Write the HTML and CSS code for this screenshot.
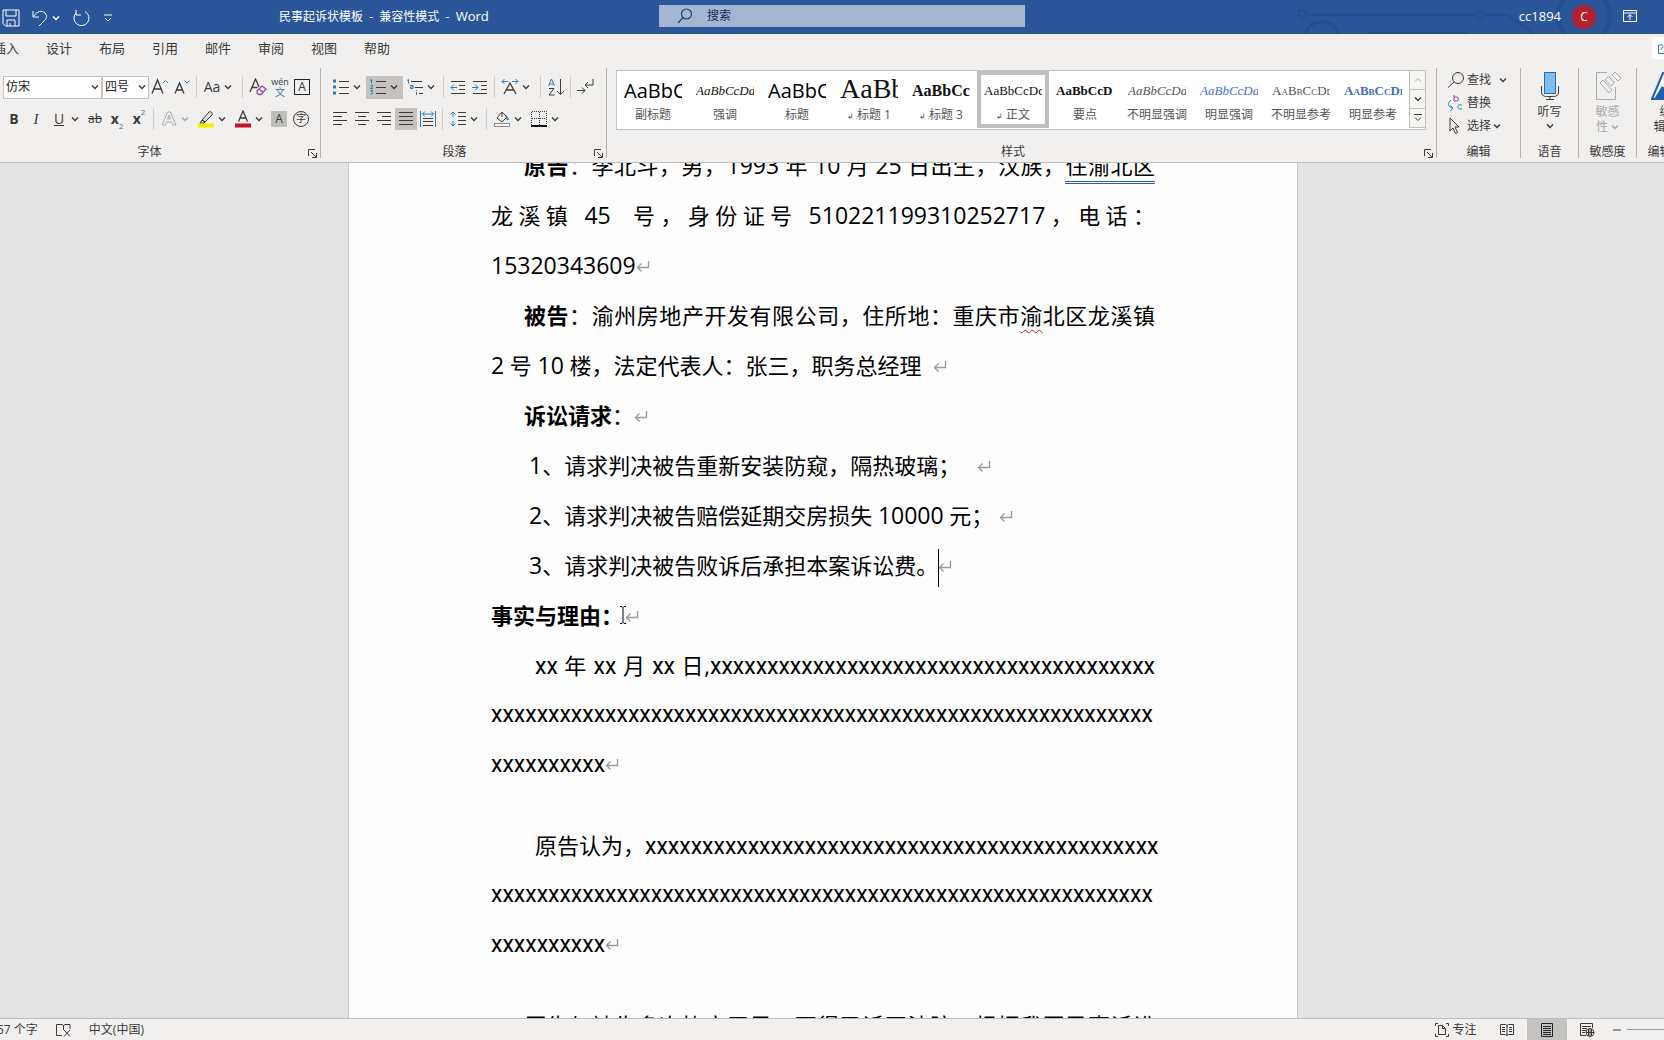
FILE: index.html
```html
<!DOCTYPE html>
<html lang="zh-CN">
<head>
<meta charset="utf-8">
<title>民事起诉状模板 - 兼容性模式 - Word</title>
<link rel="stylesheet" href="styles.css">
</head>
<body>
<svg class="sprite" aria-hidden="true">
  <symbol id="chev" viewBox="0 0 8 8"><path d="M1 2.500l3 3 3-3" fill="none" stroke="currentColor" stroke-width="1.4"/></symbol>
  <symbol id="launch" viewBox="0 0 9 9"><path d="M.5 7V.5H7M3 3l5 5M8.500 4v4.500H4" fill="none" stroke="currentColor"/></symbol>
  <symbol id="mark" viewBox="0 0 14 14"><path d="M12.500 1v6.500H2M5.500 3.500l-4 4 4 4" fill="none" stroke="#9a9a9a" stroke-width="1.300"/></symbol>
</svg>

<header class="titlebar">
  <svg class="circuit" viewBox="0 0 380 34" fill="none" stroke="#244e8e" stroke-width="2" aria-hidden="true"><circle cx="18" cy="14" r="4"/><path d="M22 15h168M202 15h22l26 19"/><circle cx="196" cy="15" r="4"/><path d="M22 34a16 12 0 0 1 32 0M84 33h100" stroke-width="3"/><circle cx="300" cy="16" r="26" stroke-width="4"/></svg>
  <nav class="quick">
    <button aria-label="保存"><svg width="18" height="18" viewBox="0 0 18 18"><path d="M1 1h16v16H3.500L1 14.500zM4 1v6h10V1M5 17v-6h8v6M8 14v3"/></svg></button>
    <button aria-label="撤消" class="undo"><svg width="16" height="18" viewBox="0 0 16 18"><path d="M1 2v6h6M1.500 7.500C5 2 10 1 13 4s1 6-1 8l-5 5"/></svg><svg class="chev"><use href="#chev"/></svg></button>
    <button aria-label="重复"><svg width="18" height="18" viewBox="0 0 18 18"><path d="M4 1v5h5M5 5.500M13 2.500a7.500 7.500 0 1 1-8.500 1"/></svg></button>
    <button aria-label="自定义" class="custom"><svg width="8" height="8" viewBox="0 0 8 8"><path d="M0 1h8M1 4l3 3 3-3"/></svg></button>
  </nav>
  <h1>民事起诉状模板&nbsp; -&nbsp; 兼容性模式&nbsp; -&nbsp; <span>Word</span></h1>
  <label class="search"><svg width="16" height="16" viewBox="0 0 16 16" fill="none" stroke="#1f3f77" stroke-width="1.200"><circle cx="9.500" cy="6" r="5"/><path d="M6 9.500L1 15"/></svg><input type="text" placeholder="搜索" aria-label="搜索"></label>
  <div class="account"><span>cc1894</span><button class="avatar">C</button><button aria-label="功能区显示选项" class="mode"><svg width="14" height="12" viewBox="0 0 14 12"><path d="M.5.5h13v11H.5zM.5 3h13M7 10V5M4.500 7L7 4.500 9.500 7"/></svg></button></div>
</header>

<nav class="tabs">
  <a href="#">插入</a><a href="#">设计</a><a href="#">布局</a><a href="#">引用</a><a href="#">邮件</a><a href="#">审阅</a><a href="#">视图</a><a href="#">帮助</a>
  <button class="share" aria-label="共享"><svg width="12" height="12" viewBox="0 0 12 12"><path class="b" d="M5 3H.5v8.500h11V7M3 8c1-3 3-4 6-4M7 1l3 3-3 3"/></svg></button>
</nav>

<section class="ribbon">
  <div class="group font">
    <div class="row">
      <select class="face" aria-label="字体"><option>仿宋</option></select>
      <select class="size" aria-label="字号"><option>四号</option></select>
      <button class="ib" aria-label="增大字号"><svg width="18" height="18" viewBox="0 0 18 18"><path d="M1 15.500L6.500 2 12 15.500M3 11h7" stroke-width="1.300"/><path class="b" d="M12 5l2.500-2.500L17 5"/></svg></button>
      <button class="ib" aria-label="减小字号"><svg width="18" height="18" viewBox="0 0 18 18"><path d="M2 15.500L6.500 5 11 15.500M3.500 12h6" stroke-width="1.300"/><path class="b" d="M11.500 2.500L14 5l2.500-2.500"/></svg></button>
      <i class="sep"></i>
      <button class="dd"><span class="ch">Aa</span><svg class="chev"><use href="#chev"/></svg></button>
      <i class="sep wide"></i>
      <button class="ib" aria-label="清除格式"><svg width="18" height="18" viewBox="0 0 18 18"><path d="M1 14L6.500 1l3.500 8M3.500 9.500h5" stroke-width="1.300"/><path d="M8 13l5-5 4 3-5 5.500H10L8 15zM10 11l4 3" stroke="#9b3fae" stroke-width="1.300"/></svg></button>
      <button class="ib pinyin"><span>wén</span><span class="zh">文</span></button>
      <button class="ib"><span class="boxed">A</span></button>
    </div>
    <div class="row">
      <button class="ib"><b>B</b></button>
      <button class="ib"><em>I</em></button>
      <button class="dd"><u class="ch">U</u><svg class="chev"><use href="#chev"/></svg></button>
      <button class="ib"><s>ab</s></button>
      <button class="ib script"><b>x</b><sub>2</sub></button>
      <button class="ib script"><b>x</b><sup>2</sup></button>
      <i class="sep"></i>
      <button class="dd dim" aria-label="文本效果"><svg width="16" height="18" viewBox="0 0 16 18"><path d="M1 15L6.500 2h3L15 15h-3.500l-1-3h-5l-1 3zM6.500 9h3L8 5z"/></svg><svg class="chev"><use href="#chev"/></svg></button>
      <button class="dd" aria-label="突出显示"><svg width="18" height="18" viewBox="0 0 18 18"><path d="M5 10l7-8c2-1 4 1 3 3l-7 7zM5 10l3 2-1 1H3z" fill="#ddd"/><path d="M1 15.500h16" stroke="#f7f000" stroke-width="4"/></svg><svg class="chev"><use href="#chev"/></svg></button>
      <button class="dd" aria-label="字体颜色"><svg width="18" height="18" viewBox="0 0 18 18"><path d="M4.500 11.500L9 1l4.500 10.500M6 8h6" stroke-width="1.300"/><path d="M1 15.500h16" stroke="#c8101e" stroke-width="4"/></svg><svg class="chev"><use href="#chev"/></svg></button>
      <button class="ib"><span class="shade">A</span></button>
      <button class="ib"><span class="ring">字</span></button>
    </div>
    <footer><span>字体</span><svg class="launch"><use href="#launch"/></svg></footer>
  </div>

  <div class="group para">
    <div class="row">
      <button class="dd" aria-label="项目符号"><svg width="16" height="16" viewBox="0 0 16 16"><path d="M6 2.500h10M6 8.500h10M6 14.500h10"/><path d="M0 2h3M0 8h3M0 14h3" stroke="#2b7fb8" stroke-width="3"/></svg><svg class="chev"><use href="#chev"/></svg></button>
      <button class="dd on" aria-label="编号"><svg width="16" height="16" viewBox="0 0 16 16"><path d="M6 2.500h10M6 8.500h10M6 14.500h10"/><path class="b" d="M0 1.500L1.500.5v4M.5 6.500h2v1L.5 9.500h2.500M.5 11.500h2l-1 1.500c2 0 1 2.500-1 2"/></svg><svg class="chev"><use href="#chev"/></svg></button>
      <button class="dd" aria-label="多级列表"><svg width="16" height="16" viewBox="0 0 16 16"><path d="M4 2.500h11M8 8.500h8M12 14.500h4"/><path class="b" d="M0 1.500L1.500.5v4M3 6.500h3v3H3.500V8H6M9.500 11v1M9.500 13v3"/></svg><svg class="chev"><use href="#chev"/></svg></button>
      <i class="sep"></i>
      <button class="ib" aria-label="减少缩进"><svg width="16" height="16" viewBox="0 0 16 16"><path d="M1 2.500h14M9 6.500h6M9 10.500h6M1 14.500h14"/><path class="b" d="M7 8.500H1M4 5.500l-3 3 3 3"/></svg></button>
      <button class="ib" aria-label="增加缩进"><svg width="16" height="16" viewBox="0 0 16 16"><path d="M1 2.500h14M9 6.500h6M9 10.500h6M1 14.500h14"/><path class="b" d="M0 8.500h6M3 5.500l3 3-3 3"/></svg></button>
      <i class="sep"></i>
      <button class="dd" aria-label="中文版式"><svg width="18" height="18" viewBox="0 0 18 18"><path d="M3 16L9 5l6 11M5.500 12h7" stroke-width="1.300"/><path class="b" d="M7 3.500H1M3.500 1L1 3.500 3.500 6M11 3.500h6M14.500 1L17 3.500 14.500 6"/></svg><svg class="chev"><use href="#chev"/></svg></button>
      <i class="sep wide"></i>
      <button class="ib" aria-label="排序"><svg width="18" height="18" viewBox="0 0 18 18"><path class="b" d="M1.500 8L4.500 1l3 7M2.500 6h4"/><path d="M2 10.500h5L2 17h5.500M13.500 1v15M10 13l3.500 3.500L17 13"/></svg></button>
      <i class="sep"></i>
      <button class="ib" aria-label="显示编辑标记"><svg width="18" height="18" viewBox="0 0 18 18"><path d="M17 1v6H9M12 4L9 7l3 3M1 12.500h8M6 9.500l3 3-3 3"/></svg></button>
    </div>
    <div class="row">
      <button class="ib" aria-label="左对齐"><svg width="14" height="14" viewBox="0 0 14 14"><path d="M0 .5h14M0 4.500h9M0 8.500h14M0 12.500h9"/></svg></button>
      <button class="ib" aria-label="居中"><svg width="14" height="14" viewBox="0 0 14 14"><path d="M0 .5h14M3 4.500h8M0 8.500h14M3 12.500h8"/></svg></button>
      <button class="ib" aria-label="右对齐"><svg width="14" height="14" viewBox="0 0 14 14"><path d="M0 .5h14M5 4.500h9M0 8.500h14M5 12.500h9"/></svg></button>
      <button class="ib on" aria-label="两端对齐"><svg width="14" height="14" viewBox="0 0 14 14"><path d="M0 .5h14M0 4.500h14M0 8.500h14M0 12.500h14"/></svg></button>
      <button class="ib" aria-label="分散对齐"><svg width="16" height="16" viewBox="0 0 16 16"><path d="M3 7.500h10M3 10.500h10M3 14.500h10"/><path class="b" d="M.5 0v16M15.500 0v16M2.500 3h11M5 .5L2.500 3 5 5.500M11 .5L13.500 3 11 5.500"/></svg></button>
      <i class="sep"></i>
      <button class="dd" aria-label="行距"><svg width="16" height="16" viewBox="0 0 16 16"><path d="M8 1.500h8M8 5.500h8M8 9.500h8M8 13.500h8"/><path class="b" d="M3 1v5M3 10v5M.5 3.500L3 1l2.500 2.500M.5 12.500L3 15l2.500-2.500"/></svg><svg class="chev"><use href="#chev"/></svg></button>
      <i class="sep"></i>
      <button class="dd" aria-label="底纹"><svg width="16" height="16" viewBox="0 0 16 16"><path d="M8 1L3 7l5 4 5-5zM8 1v5"/><path d="M12 5l2 4" class="b" stroke-width="2"/><path d="M.5 12.500h15v3H.5z" stroke="#888" fill="#fff"/></svg><svg class="chev"><use href="#chev"/></svg></button>
      <button class="dd" aria-label="边框"><svg width="16" height="16" viewBox="0 0 16 16"><path d="M.5 14V.5h15V14M8.500 1v13M1 7.500h14" stroke-dasharray="1 1"/><path d="M0 15h16" stroke-width="2" stroke="#000"/></svg><svg class="chev"><use href="#chev"/></svg></button>
    </div>
    <footer><span>段落</span><svg class="launch"><use href="#launch"/></svg></footer>
  </div>

  <div class="group styles">
    <div class="gallery">
      <button><span class="s s-title">AaBbCc</span><span>副标题</span></button>
      <button><span class="s s-it">AaBbCcDd</span><span>强调</span></button>
      <button><span class="s s-title">AaBbCc</span><span>标题</span></button>
      <button><span class="s s-h1">AaBb</span><span><small>↲</small> 标题 1</span></button>
      <button><span class="s s-h3">AaBbCc</span><span><small>↲</small> 标题 3</span></button>
      <button class="sel"><span class="s">AaBbCcDd</span><span><small>↲</small> 正文</span></button>
      <button><span class="s s-strong">AaBbCcD</span><span>要点</span></button>
      <button><span class="s s-it grey">AaBbCcDd</span><span>不明显强调</span></button>
      <button><span class="s s-it blue">AaBbCcDd</span><span>明显强调</span></button>
      <button><span class="s s-caps grey">AaBbCcDd</span><span>不明显参考</span></button>
      <button><span class="s s-caps s-strong blue">AaBbCcDd</span><span>明显参考</span></button>
      <div class="scroll">
        <button aria-label="向上" class="up"><svg width="8" height="8" viewBox="0 0 8 8"><path d="M1 5.500l3-3 3 3"/></svg></button>
        <button aria-label="向下"><svg class="chev"><use href="#chev"/></svg></button>
        <button aria-label="其他"><svg width="8" height="10" viewBox="0 0 8 10"><path d="M0 1.500h8M1 4.500l3 3 3-3"/></svg></button>
      </div>
    </div>
    <footer><span>样式</span><svg class="launch"><use href="#launch"/></svg></footer>
  </div>

  <div class="group edit">
    <div class="stack">
      <button><svg width="18" height="16" viewBox="0 0 18 16"><circle cx="11" cy="6" r="5.500"/><path d="M7 10l-6 5.500"/></svg>查找<svg class="chev far"><use href="#chev"/></svg></button>
      <button><svg width="18" height="18" viewBox="0 0 18 18"><path d="M7 1v6h2.500a2 2 0 0 0 0-4H7" stroke="#a040a8"/><path class="b" d="M15 11.500c-3-2-5 0-4 2s3 2 4 1M4 6c-4 3-3 7 1 8M3 11.500L6 14l-2.500 3"/></svg>替换</button>
      <button><svg width="18" height="18" viewBox="0 0 18 18"><path d="M3 1v13l3-3 2.500 5.500 2-1L8 10h4z"/></svg>选择<svg class="chev"><use href="#chev"/></svg></button>
    </div>
    <footer><span>编辑</span></footer>
  </div>
  <div class="group tall">
    <button><svg width="20" height="30" viewBox="0 0 20 30"><rect x="4.500" y="1.500" width="11" height="21" fill="#7fbdee" stroke="#1d6fb0"/><path d="M1.500 15v6c0 3 2 4.500 5 4.500h7c3 0 5-1.500 5-4.500v-6M10 25.500V29M6 28.500h8"/></svg><span>听写</span><svg class="chev"><use href="#chev"/></svg></button>
    <footer><span>语音</span></footer>
  </div>
  <div class="group tall">
    <button class="dim" disabled><svg width="28" height="30" viewBox="0 0 28 30"><path d="M13 1.500H2.500v27h19V16M6 12l3-3 9 10-3 3zM11 9l3.500-4 2 2c2 2 1 4 4 4l-3 4zM18 4l3-3 6 6-3 3z"/></svg><span>敏感<br>性 <svg class="chev"><use href="#chev"/></svg></span></button>
    <footer><span>敏感度</span></footer>
  </div>
  <div class="group tall">
    <button><svg width="30" height="30" viewBox="0 0 30 30"><path d="M1 28L12 2h6l11 26z" fill="#fff" stroke="#1f5fb0" stroke-width="2"/><path d="M3 28l8-13 4 3 4-3 8 13z" fill="#1f5fb0" stroke="none"/></svg><span>编<br>辑器</span></button>
    <footer><span>编辑器</span></footer>
  </div>
</section>

<main class="workspace">
  <article class="page">
    <p class="in full"><b>原告</b>：李北斗，男，<span class="n">1993</span> 年 <span class="n">10</span> 月 <span class="n">25</span> 日出生，汉族，<span class="gram">住渝北区</span></p>
    <p class="full">龙溪镇 <span class="n">45</span>&nbsp; 号，身份证号 <span class="n">510221199310252717</span>，电话：</p>
    <p><span class="n">15320343609</span><svg class="mark"><use href="#mark"/></svg></p>
    <p class="in full"><b>被告</b>：渝州房地产开发有限公司，住所地：重庆市<span class="spell">渝</span>北区龙溪镇</p>
    <p><span class="n">2</span> 号 <span class="n">10</span> 楼，法定代表人：张三，职务总经理&nbsp; <svg class="mark"><use href="#mark"/></svg></p>
    <p class="in"><b>诉讼请求</b>：<svg class="mark"><use href="#mark"/></svg></p>
    <p class="item"><span class="n">1</span>、请求判决被告重新安装防窥，隔热玻璃；&nbsp; &nbsp;<svg class="mark"><use href="#mark"/></svg></p>
    <p class="item"><span class="n">2</span>、请求判决被告赔偿延期交房损失 <span class="n">10000</span> 元；&nbsp;<svg class="mark"><use href="#mark"/></svg></p>
    <p class="item"><span class="n">3</span>、请求判决被告败诉后承担本案诉讼费。<i class="caret"></i><svg class="mark"><use href="#mark"/></svg></p>
    <p><b>事实与理由：</b><svg class="ibeam" viewBox="0 0 8 18"><path d="M1 .5h2l1 1 1-1h2M1 17.500h2l1-1 1 1h2M4 1.500v15" fill="none" stroke="#000"/></svg><svg class="mark"><use href="#mark"/></svg></p>
    <p class="in2 full"><span class="x">xx</span> 年 <span class="x">xx</span> 月 <span class="x">xx</span> 日,<span class="x">xxxxxxxxxxxxxxxxxxxxxxxxxxxxxxxxxxxxxxx</span></p>
    <p class="x">xxxxxxxxxxxxxxxxxxxxxxxxxxxxxxxxxxxxxxxxxxxxxxxxxxxxxxxxxx</p>
    <p class="x last">xxxxxxxxxx<svg class="mark"><use href="#mark"/></svg></p>
    <p class="in2">原告认为，<span class="x">xxxxxxxxxxxxxxxxxxxxxxxxxxxxxxxxxxxxxxxxxxxxx</span></p>
    <p class="x">xxxxxxxxxxxxxxxxxxxxxxxxxxxxxxxxxxxxxxxxxxxxxxxxxxxxxxxxxx</p>
    <p class="x last">xxxxxxxxxx<svg class="mark"><use href="#mark"/></svg></p>
    <p class="in full">原告与被告多次协商无果，不得已诉至法院，根据我国民事诉讼</p>
  </article>
</main>

<footer class="status">
  <span class="count">57 个字</span>
  <button aria-label="校对"><svg width="15" height="14" viewBox="0 0 15 14"><path d="M6 12.500H.5v-11H6l1.500 1 1.500-1h5V6M7.500 2.500V7M8 7l6 6.500M14 7l-6 6.500"/></svg></button>
  <span>中文(中国)</span>
  <div class="views">
    <button class="focus"><svg width="14" height="14" viewBox="0 0 14 14"><path d="M3 .5H.5V3M11 .5h2.500V3M3 13.500H.5V11M11 13.500h2.500V11M3.500 2.500h4l3 3v6h-7zM7.500 2.500v3h3"/></svg>专注</button>
    <button aria-label="阅读视图"><svg width="14" height="12" viewBox="0 0 14 12"><path d="M7 1.500L5.500.5h-5v10h5L7 11.500l1.500-1h5V.5h-5L7 1.500v10M2 3.500h3M2 5.500h3M2 7.500h3M9 3.500h3M9 5.500h3M9 7.500h3"/></svg></button>
    <button aria-label="页面视图" class="on"><svg width="12" height="14" viewBox="0 0 12 14"><path d="M.5.5h11v13H.5zM2 3.500h8M2 5.500h8M2 7.500h8M2 9.500h8M2 11.500h8" stroke="#222"/></svg></button>
    <button aria-label="Web 版式"><svg width="15" height="14" viewBox="0 0 15 14"><path d="M6 12.500H.5V.5h12V5M2 3.500h9M2 5.500h5M2 7.500h4M2 9.500h3"/><circle cx="10" cy="9.500" r="4" fill="#f3f2f1"/><path d="M6 9.500h8M10 5.500v8M8.500 6v7M11.500 6v7"/></svg></button>
    <button aria-label="缩小" class="minus"><svg width="8" height="2" viewBox="0 0 8 2"><path d="M0 1h8"/></svg></button>
    <i class="track"></i>
  </div>
</footer>
</body>
</html>
```
FILE: styles.css
```css
* { box-sizing: border-box; }
body {
  margin: 0;
  height: 100vh;
  display: flex;
  flex-direction: column;
  overflow: hidden;
  background: #e4e4e4;
  color: #3b3a39;
  font: 12px/16px "Open Sans", "Noto Sans CJK SC", sans-serif;
}
button {
  display: flex;
  align-items: center;
  justify-content: center;
  padding: 0;
  border: 0;
  background: none;
  color: inherit;
  font: inherit;
}
svg { flex: none; }
button svg { fill: none; stroke: #3b3a39; }
button svg .b { stroke: #2b7fb8; }
.sprite { position: absolute; width: 0; height: 0; }
.chev { width: 8px; height: 8px; }
button .chev { stroke: none; }
.on { background: #c5c3c1; }

/* title bar */
.titlebar {
  position: relative;
  flex: none;
  display: flex;
  align-items: center;
  height: 34px;
  padding-bottom: 2px;
  background: #2a5699;
  color: #fff;
}
.titlebar > * { position: relative; }
.titlebar .circuit { position: absolute; top: 0; right: 0; width: 380px; height: 34px; }
.titlebar button svg { stroke: #fff; }
.quick { display: flex; align-items: center; width: 279px; padding: 4px 0 0 2px; gap: 12px; }
.undo { gap: 4px; }
.custom { margin-left: 2px; }
.titlebar h1 { margin: 0; width: 380px; font-size: 12px; font-weight: 400; white-space: pre; }
.titlebar h1 span { font-size: 13px; }
.search {
  display: flex;
  align-items: center;
  flex: 0 1 366px;
  height: 22px;
  padding-left: 18px;
  gap: 14px;
  background: #a3b7d3;
}
.search input { flex: 1; min-width: 0; padding: 0; border: 0; background: none; font: inherit; }
.search input::placeholder { color: #14295c; opacity: 1; }
.account { display: flex; align-items: center; margin-left: auto; padding-right: 27px; font-size: 13px; }
.avatar { width: 24px; height: 24px; margin: 2px 27px 0 11px; border-radius: 50%; background: #b3202e; font-size: 12px; }

/* ribbon tabs */
.tabs {
  flex: none;
  display: flex;
  align-items: center;
  gap: 27px;
  height: 30px;
  margin-left: -7px;
  padding-bottom: 3px;
  font-size: 13px;
}
.tabs, .ribbon { background: #f1f0ef; }
.tabs a { color: inherit; text-decoration: none; white-space: nowrap; }
.share { width: 12px; height: 22px; margin-left: auto; background: #fff; justify-content: flex-start; overflow: hidden; padding-left: 6px; }

/* ribbon */
.ribbon {
  flex: none;
  display: flex;
  height: 99px;
  padding: 4px 0;
  border-bottom: 1px solid #c0bfbe;
  overflow: hidden;
}
.group { flex: none; display: flex; flex-direction: column; border-right: 1px solid #b5b3b1; }
.group > footer {
  display: flex;
  align-items: center;
  justify-content: center;
  position: relative;
  height: 12px;
  margin-top: auto;
  white-space: nowrap;
}
.launch { position: absolute; right: 3px; bottom: 0; width: 9px; height: 9px; }
.row { display: flex; align-items: center; height: 24px; margin-top: 7px; }
.row + .row { margin-top: 8px; }
.font { width: 321px; padding-left: 3px; }
.font > footer { padding-right: 24px; }
.para { width: 286px; padding-left: 8px; }
.para > footer { padding-right: 26px; }
.ib { flex: none; width: 22px; height: 22px; }
.dd { flex: none; width: 37px; height: 23px; justify-content: flex-start; }
.dd > :first-child { margin: 0 auto; }
.dd .chev { margin: 0 5px 0 0; }
.sep { flex: none; width: 4px; height: 22px; margin-right: 3px; border-right: 1px solid #cfcdcb; }
.sep.wide { width: 6px; margin-right: 4px; }
.face, .size {
  flex: none;
  height: 23px;
  width: 99px;
  padding: 0 2px;
  appearance: none;
  border: 1px solid #c5c3c1;
  border-radius: 0;
  color: #222;
  font: inherit;
  background: #fff url("data:image/svg+xml,%3Csvg xmlns='http://www.w3.org/2000/svg' width='8' height='8'%3E%3Cpath d='M1 2.500l3 3 3-3' fill='none' stroke='%233b3a39' stroke-width='1.400'/%3E%3C/svg%3E") no-repeat right 2px center;
}
.size { width: 47px; }
.ch { font-size: 14px; }
.row b { font-size: 14px; }
.row em { font: italic 15px "Liberation Serif", serif; }
.pinyin { flex-direction: column; font-size: 9px; line-height: 10px; }
.pinyin .zh { color: #2b7fb8; font-size: 10px; }
.boxed { width: 16px; height: 16px; border: 1px solid #222; line-height: 14px; }
.shade { width: 16px; height: 16px; background: #c0bebc; }
.ring { width: 16px; height: 16px; border: 1px solid #3b3a39; border-radius: 50%; font-size: 10px; line-height: 13px; }
.script sub, .script sup { color: #2b7fb8; font-size: 8px; line-height: 8px; }
.script sub { align-self: flex-end; }
.script sup { align-self: flex-start; }
.dim { color: #aaa; }
.dim svg { stroke: #aaa; }

.styles { width: 830px; padding: 2px 0 0 9px; }
.styles > footer { padding-right: 26px; }
.gallery { display: flex; height: 60px; width: 810px; border: 1px solid #c5c3c1; background: #fff; }
.gallery > button { flex: none; flex-direction: column; justify-content: flex-start; width: 72px; padding: 4px 0 0; color: #555; white-space: nowrap; }
.gallery > .sel { height: 57px; padding: 0; border: 4px solid #c0bfbd; }
.gallery small { font: 8px "DejaVu Sans", sans-serif; }
.s { width: 58px; height: 32px; overflow: hidden; text-align: left; color: #111; font: 13px/32px "Liberation Serif", serif; }
.s-title { font: 20px/32px "Open Sans", sans-serif; color: #000; }
.s-it { font-style: italic; }
.s-h1 { font-size: 28px; line-height: 28px; }
.s-h3 { font-size: 16px; font-weight: 700; }
.s-strong { font-weight: 700; }
.s-caps { font-variant: small-caps; }
.grey { color: #555; }
.blue { color: #4472c4; }
.scroll { width: 16px; margin-left: auto; }
.scroll button { width: 16px; height: 19px; border: 1px solid #c0bfbd; border-width: 0 0 1px 1px; background: #f6f5f4; }
.scroll .up svg { stroke: #aaa; }

.edit { width: 84px; padding-left: 10px; }
.edit > footer { padding-right: 10px; }
.stack button { height: 23px; gap: 2px; }
.stack .far { margin-left: 6px; }
.tall { width: 58px; text-align: center; }
.tall button { flex-direction: column; gap: 3px; padding-top: 3px; line-height: 15px; }

/* document */
.workspace { flex: 1; min-height: 0; overflow: hidden; padding-right: 18px; }
.page {
  max-width: 950px;
  margin: 0 auto;
  padding: 0 142px;
  border: solid #c6c6c6;
  border-width: 0 1px;
  background: #fdfdfd;
  color: #000;
  font-size: 22px;
  line-height: 50px;
}
.page p { margin: 0; height: 50px; white-space: nowrap; }
.page p:first-child { margin-top: -23px; }
.page .full { text-align: justify; text-align-last: justify; }
.page .in { padding-left: 33px; }
.page .in2 { padding-left: 44px; }
.page .item { padding-left: 38px; }
.page .last { margin-bottom: 30px; }
.n { font-size: 23px; }
.x { font: 23px/50px Roboto, sans-serif; }
.mark { width: 14px; height: 14px; }
.gram { padding-bottom: 1px; border-bottom: 3px double #2f5fa0; }
.spell { text-decoration: underline wavy #d02020 1px; text-underline-offset: 5px; }
.caret { display: inline-block; width: 1px; height: 38px; margin-right: -1px; background: #000; vertical-align: middle; }
.ibeam { width: 8px; height: 18px; margin: 0 -2px 0 -4px; }

/* status bar */
.status {
  flex: none;
  display: flex;
  align-items: center;
  height: 22px;
  gap: 18px;
  border-top: 1px solid #bdbcbb;
  background: #f1f0ef;
}
.count { margin-left: -3px; }
.views { display: flex; align-self: stretch; margin-left: auto; }
.views button { width: 40px; }
.views .focus { width: 54px; gap: 3px; margin-right: 4px; }
.views .minus { width: 20px; }
.track { width: 37px; height: 1px; margin: 10px 0 0; background: #999; }
```
